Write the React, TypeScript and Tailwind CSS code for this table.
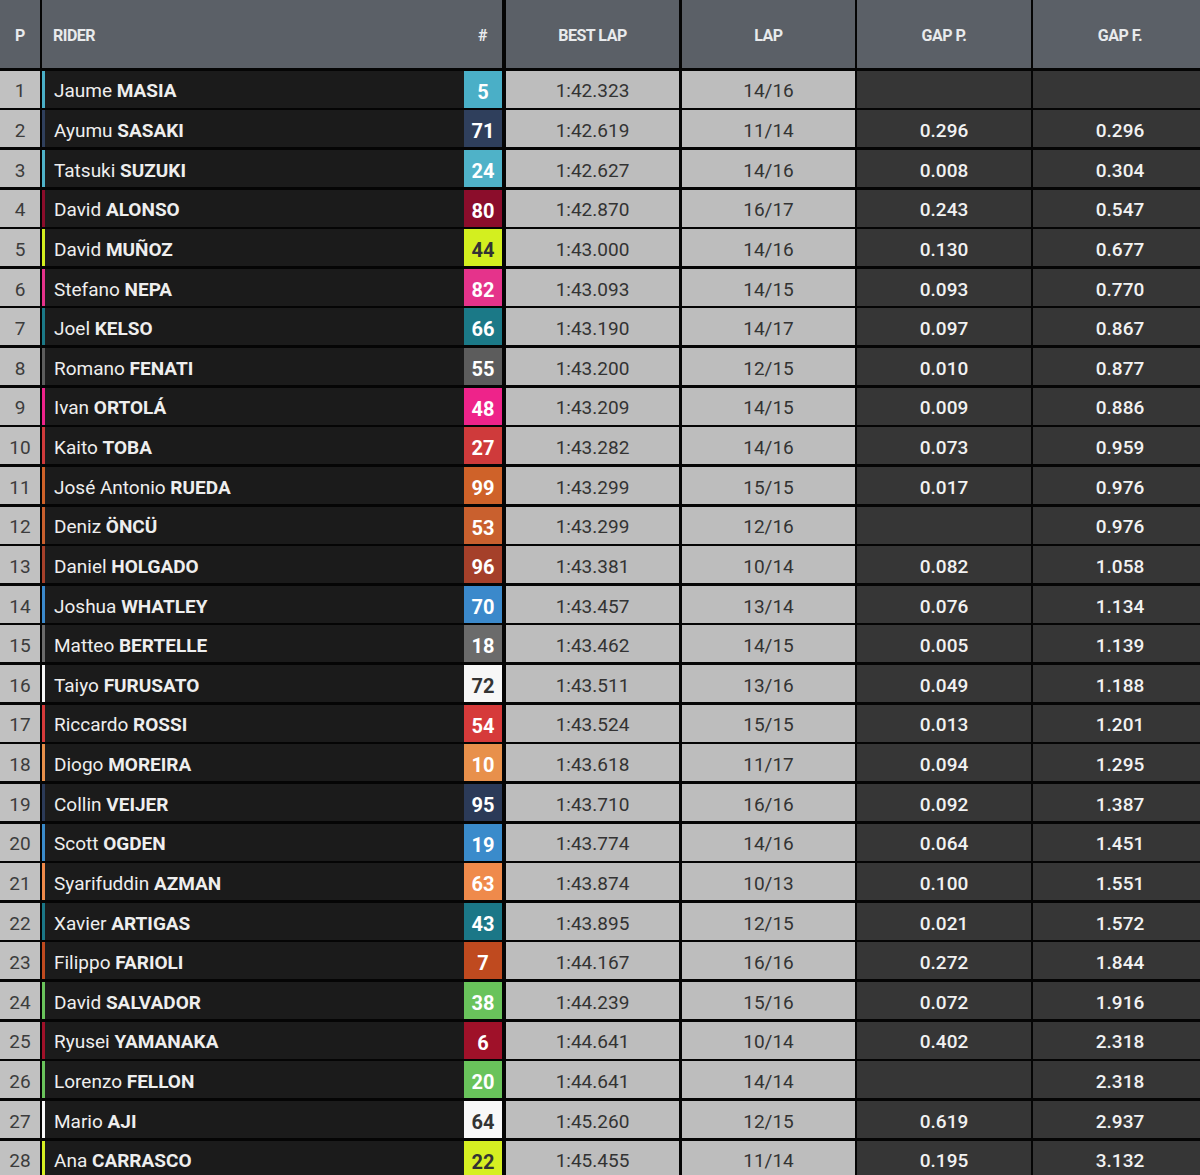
type Row = {
  pos: number;
  first: string;
  last: string;
  num: string;
  color: string;
  dark?: boolean;
  best: string;
  lap: string;
  gapP: string;
  gapF: string;
};

const rows: Row[] = [
  { pos: 1, first: "Jaume", last: "MASIA", num: "5", color: "#4aafc7", best: "1:42.323", lap: "14/16", gapP: "", gapF: "" },
  { pos: 2, first: "Ayumu", last: "SASAKI", num: "71", color: "#2f3f5c", best: "1:42.619", lap: "11/14", gapP: "0.296", gapF: "0.296" },
  { pos: 3, first: "Tatsuki", last: "SUZUKI", num: "24", color: "#4fb2c8", best: "1:42.627", lap: "14/16", gapP: "0.008", gapF: "0.304" },
  { pos: 4, first: "David", last: "ALONSO", num: "80", color: "#8b0d2b", best: "1:42.870", lap: "16/17", gapP: "0.243", gapF: "0.547" },
  { pos: 5, first: "David", last: "MUÑOZ", num: "44", color: "#d3ef1f", dark: true, best: "1:43.000", lap: "14/16", gapP: "0.130", gapF: "0.677" },
  { pos: 6, first: "Stefano", last: "NEPA", num: "82", color: "#e5338b", best: "1:43.093", lap: "14/15", gapP: "0.093", gapF: "0.770" },
  { pos: 7, first: "Joel", last: "KELSO", num: "66", color: "#1b7987", best: "1:43.190", lap: "14/17", gapP: "0.097", gapF: "0.867" },
  { pos: 8, first: "Romano", last: "FENATI", num: "55", color: "#5c5c5c", best: "1:43.200", lap: "12/15", gapP: "0.010", gapF: "0.877" },
  { pos: 9, first: "Ivan", last: "ORTOLÁ", num: "48", color: "#ee238a", best: "1:43.209", lap: "14/15", gapP: "0.009", gapF: "0.886" },
  { pos: 10, first: "Kaito", last: "TOBA", num: "27", color: "#cf3a3b", best: "1:43.282", lap: "14/16", gapP: "0.073", gapF: "0.959" },
  { pos: 11, first: "José Antonio", last: "RUEDA", num: "99", color: "#cf6229", best: "1:43.299", lap: "15/15", gapP: "0.017", gapF: "0.976" },
  { pos: 12, first: "Deniz", last: "ÖNCÜ", num: "53", color: "#c9602e", best: "1:43.299", lap: "12/16", gapP: "", gapF: "0.976" },
  { pos: 13, first: "Daniel", last: "HOLGADO", num: "96", color: "#a5402a", best: "1:43.381", lap: "10/14", gapP: "0.082", gapF: "1.058" },
  { pos: 14, first: "Joshua", last: "WHATLEY", num: "70", color: "#3b89cb", best: "1:43.457", lap: "13/14", gapP: "0.076", gapF: "1.134" },
  { pos: 15, first: "Matteo", last: "BERTELLE", num: "18", color: "#6b6b6b", best: "1:43.462", lap: "14/15", gapP: "0.005", gapF: "1.139" },
  { pos: 16, first: "Taiyo", last: "FURUSATO", num: "72", color: "#f7f7f7", dark: true, best: "1:43.511", lap: "13/16", gapP: "0.049", gapF: "1.188" },
  { pos: 17, first: "Riccardo", last: "ROSSI", num: "54", color: "#d63a3a", best: "1:43.524", lap: "15/15", gapP: "0.013", gapF: "1.201" },
  { pos: 18, first: "Diogo", last: "MOREIRA", num: "10", color: "#e8904b", best: "1:43.618", lap: "11/17", gapP: "0.094", gapF: "1.295" },
  { pos: 19, first: "Collin", last: "VEIJER", num: "95", color: "#2b3a58", best: "1:43.710", lap: "16/16", gapP: "0.092", gapF: "1.387" },
  { pos: 20, first: "Scott", last: "OGDEN", num: "19", color: "#3a8bcb", best: "1:43.774", lap: "14/16", gapP: "0.064", gapF: "1.451" },
  { pos: 21, first: "Syarifuddin", last: "AZMAN", num: "63", color: "#ef8a4b", best: "1:43.874", lap: "10/13", gapP: "0.100", gapF: "1.551" },
  { pos: 22, first: "Xavier", last: "ARTIGAS", num: "43", color: "#1b7787", best: "1:43.895", lap: "12/15", gapP: "0.021", gapF: "1.572" },
  { pos: 23, first: "Filippo", last: "FARIOLI", num: "7", color: "#bf4a1f", best: "1:44.167", lap: "16/16", gapP: "0.272", gapF: "1.844" },
  { pos: 24, first: "David", last: "SALVADOR", num: "38", color: "#69c35b", best: "1:44.239", lap: "15/16", gapP: "0.072", gapF: "1.916" },
  { pos: 25, first: "Ryusei", last: "YAMANAKA", num: "6", color: "#9f1129", best: "1:44.641", lap: "10/14", gapP: "0.402", gapF: "2.318" },
  { pos: 26, first: "Lorenzo", last: "FELLON", num: "20", color: "#69c35b", best: "1:44.641", lap: "14/14", gapP: "", gapF: "2.318" },
  { pos: 27, first: "Mario", last: "AJI", num: "64", color: "#f8f8f8", dark: true, best: "1:45.260", lap: "12/15", gapP: "0.619", gapF: "2.937" },
  { pos: 28, first: "Ana", last: "CARRASCO", num: "22", color: "#d6ef22", dark: true, best: "1:45.455", lap: "11/14", gapP: "0.195", gapF: "3.132" },
];

const font = { fontFamily: "Roboto, 'Liberation Sans', sans-serif" };

export default function App() {
  return (
    <div className="w-full h-[1175px] overflow-hidden bg-black" style={font}>
      <div className="w-[1207px] flex flex-col gap-y-[2.63px] bg-[#050505]">
        {/* header */}
        <div className="h-[68px] flex text-[#e8eaec] text-[16px] font-bold tracking-[-0.5px]">
          <div className="w-[40px] bg-[#5b6067] flex items-center justify-center pt-[4px]">P</div>
          <div className="w-[460px] ml-[2px] bg-[#5b6067] flex items-center justify-between pl-[11px] pr-[15px] pt-[4px]">
            <span>RIDER</span>
            <span>#</span>
          </div>
          <div className="w-[173px] ml-[4px] bg-[#5b6067] flex items-center justify-center pt-[4px]">BEST LAP</div>
          <div className="w-[173px] ml-[3px] bg-[#5b6067] flex items-center justify-center pt-[4px]">LAP</div>
          <div className="w-[174px] ml-[2px] bg-[#5b6067] flex items-center justify-center pt-[4px]">GAP P.</div>
          <div className="w-[174px] ml-[2px] bg-[#5b6067] flex items-center justify-center pt-[4px]">GAP F.</div>
        </div>

        {rows.map((r) => (
          <div key={r.pos} className="h-[37px] flex text-[19px]">
            <div className="w-[40px] bg-[#c1c1c1] text-[#3c3c3c] flex items-center justify-center pt-[5px]">{r.pos}</div>
            <div className="w-[422px] ml-[2px] bg-[#1b1b1b] flex items-center">
              <div className="w-[3px] h-full" style={{ backgroundColor: r.color }} />
              <span className="pl-[9px] pt-[5px] text-[#eeeeee] whitespace-nowrap">
                {r.first} <span className="font-bold">{r.last}</span>
              </span>
            </div>
            <div
              className={`w-[38px] flex items-center justify-center pt-[5px] font-bold text-[20px] ${r.dark ? "text-[#333333]" : "text-white"}`}
              style={{ backgroundColor: r.color }}
            >
              {r.num}
            </div>
            <div className="w-[173px] ml-[4px] bg-[#bdbdbd] text-[#333333] flex items-center justify-center pt-[5px]">{r.best}</div>
            <div className="w-[173px] ml-[3px] bg-[#bdbdbd] text-[#333333] flex items-center justify-center pt-[5px]">{r.lap}</div>
            <div className="w-[174px] ml-[2px] bg-[#363636] text-[#f2f2f2] font-medium flex items-center justify-center pt-[5px]">{r.gapP}</div>
            <div className="w-[174px] ml-[2px] bg-[#363636] text-[#f2f2f2] font-medium flex items-center justify-center pt-[5px]">{r.gapF}</div>
          </div>
        ))}
      </div>
    </div>
  );
}
